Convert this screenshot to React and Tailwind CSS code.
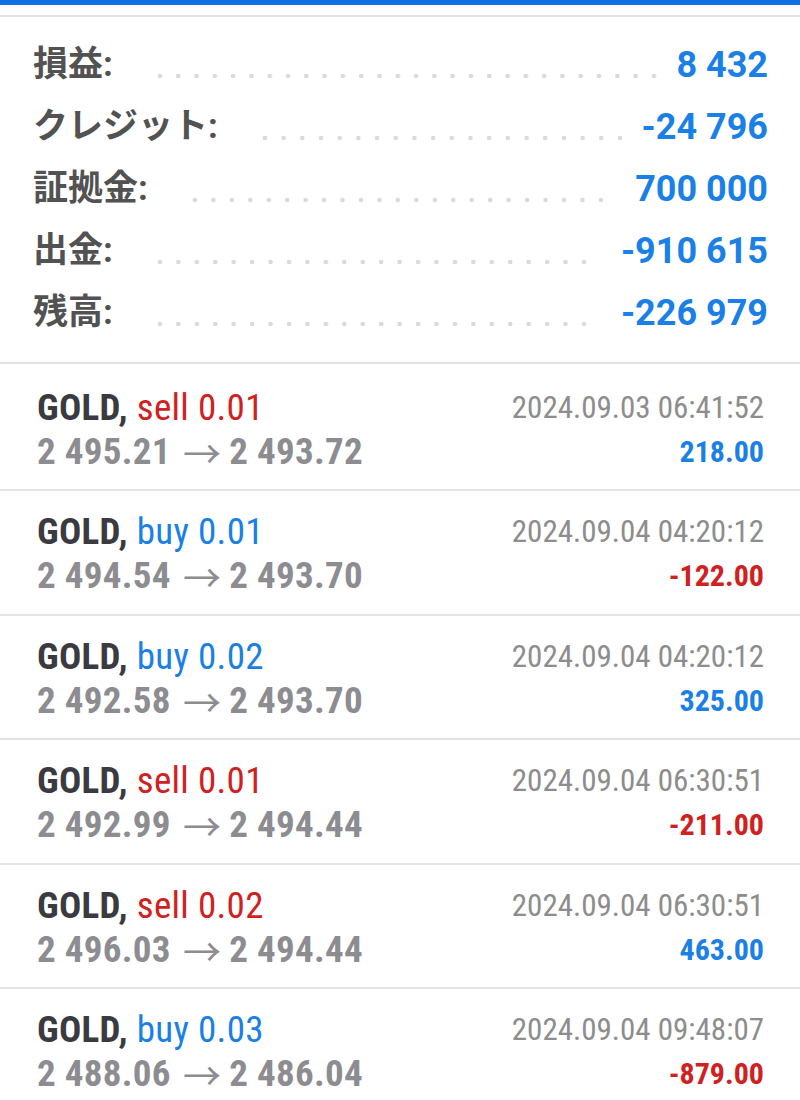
import React from "react";

const summary = [
  { label: "損益:", value: "8 432", dots: "ml-[38px] mr-[13px]" },
  { label: "クレジット:", value: "-24 796", dots: "ml-[38px] mr-[13px]" },
  { label: "証拠金:", value: "700 000", dots: "ml-[38px] mr-[25px]" },
  { label: "出金:", value: "-910 615", dots: "ml-[38px] mr-[28px]" },
  { label: "残高:", value: "-226 979", dots: "ml-[38px] mr-[28px]" },
];

const deals = [
  { type: "sell", vol: "0.01", from: "2 495.21", to: "2 493.72", time: "2024.09.03 06:41:52", profit: "218.00" },
  { type: "buy", vol: "0.01", from: "2 494.54", to: "2 493.70", time: "2024.09.04 04:20:12", profit: "-122.00" },
  { type: "buy", vol: "0.02", from: "2 492.58", to: "2 493.70", time: "2024.09.04 04:20:12", profit: "325.00" },
  { type: "sell", vol: "0.01", from: "2 492.99", to: "2 494.44", time: "2024.09.04 06:30:51", profit: "-211.00" },
  { type: "sell", vol: "0.02", from: "2 496.03", to: "2 494.44", time: "2024.09.04 06:30:51", profit: "463.00" },
  { type: "buy", vol: "0.03", from: "2 488.06", to: "2 486.04", time: "2024.09.04 09:48:07", profit: "-879.00" },
];

const cond = "font-['Roboto_Condensed',Roboto,sans-serif] font-stretch-condensed";

export default function App() {
  return (
    <div className="w-[800px] h-[1100px] bg-white overflow-hidden">
      <div className="h-[5px] bg-[#1170e4]" />
      <div className="h-[10px]" />
      <div className="h-[2px] bg-[#e2e2e2]" />
      <div className="pt-[17px] pb-[18px] pl-[33px] pr-[32px]">
        {summary.map((r) => (
          <div key={r.label} className="h-[62px] flex items-center">
            <span className="shrink-0 text-[35px] font-bold text-[#525252] font-['Roboto','Noto_Sans_CJK_JP',sans-serif]">
              {r.label}
            </span>
            <div
              className={`flex-1 h-[6px] mt-[22px] bg-[radial-gradient(circle,#dadada_2px,transparent_2.6px)] bg-[length:17.8px_6px] bg-repeat-space ${r.dots}`}
            />
            <span className="shrink-0 text-[36px] font-bold text-[#1a7fe6] font-['Roboto',sans-serif]">
              {r.value}
            </span>
          </div>
        ))}
      </div>
      {deals.map((d, i) => (
        <div
          key={i}
          className={`${
            i === 0 ? "h-[127px] pt-[22px]" : "h-[124.5px] pt-[19px]"
          } border-t-2 border-[#e4e4e4] flex justify-between pl-[37px] pr-[36px] ${cond}`}
        >
          <div className="flex flex-col">
            <div className="leading-[44px] text-[37px] tracking-[0.3px] whitespace-nowrap">
              <span className="font-bold text-[#3a3a40]">GOLD,</span>{" "}
              <span className={d.type === "sell" ? "text-[#d0211f]" : "text-[#1a80e6]"}>
                {d.type} {d.vol}
              </span>
            </div>
            <div className="leading-[44px] text-[37px] tracking-[0.3px] font-bold text-[#8c8c91] whitespace-nowrap flex items-center">
              <span>{d.from}</span>
              <span className="ml-[12px] mr-[8px] font-['Noto_Sans_CJK_JP',sans-serif] font-normal text-[38px] leading-[44px]">→</span>
              <span>{d.to}</span>
            </div>
          </div>
          <div className="flex flex-col items-end">
            <div className="leading-[44px] text-[31px] text-[#8d8d8d] whitespace-nowrap">{d.time}</div>
            <div
              className={`leading-[44px] text-[30px] font-bold ${
                d.profit.startsWith("-") ? "text-[#d0211f]" : "text-[#1a80e6]"
              }`}
            >
              {d.profit}
            </div>
          </div>
        </div>
      ))}
    </div>
  );
}
